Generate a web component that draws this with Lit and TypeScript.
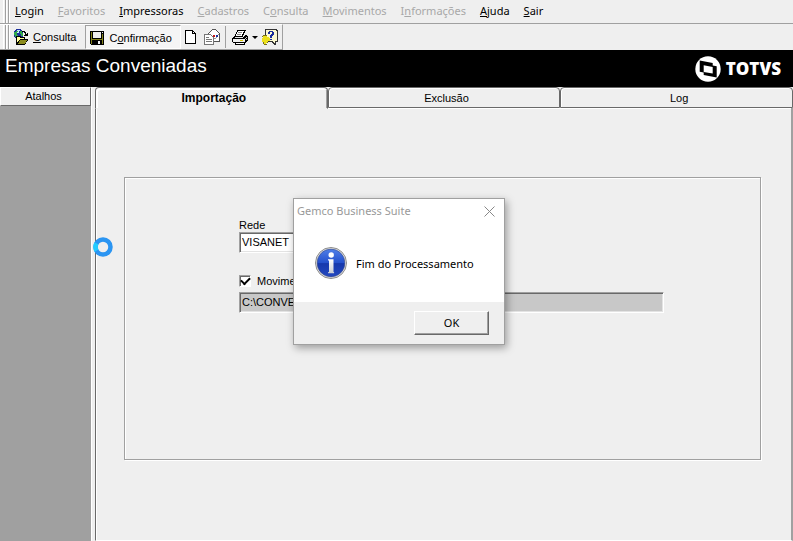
import { LitElement, html, css, svg } from "lit";
import { customElement, state } from "lit/decorators.js";
import { classMap } from "lit/directives/class-map.js";

const MENU = [
  { pre: "", key: "L", post: "ogin", off: false },
  { pre: "", key: "F", post: "avoritos", off: true },
  { pre: "", key: "I", post: "mpressoras", off: false },
  { pre: "", key: "C", post: "adastros", off: true },
  { pre: "C", key: "o", post: "nsulta", off: true },
  { pre: "", key: "M", post: "ovimentos", off: true },
  { pre: "I", key: "n", post: "formações", off: true },
  { pre: "", key: "A", post: "juda", off: false },
  { pre: "", key: "S", post: "air", off: false },
];

const TABS = ["Importação", "Exclusão", "Log"];

const searchIcon = svg`<svg width="16" height="16" viewBox="0 0 16 16" shape-rendering="crispEdges">
  <circle cx="5.500" cy="5" r="5" fill="#1c2f9c"/>
  <path d="M1 3h2v-1h2v2h-1v2h1v2h-3v-2h-1zM7 2h2v2h1v3h-2v-2h-1z" fill="#2fa84a"/>
  <path d="M4 1h3v1h-1v2h-2v-1h1v-1h-1z" fill="#c8ecf8"/>
  <path d="M3 7h4l1 1h4v2h3v1l-3 5h-9z" fill="#000"/>
  <path d="M4 8h2l1 1h4v1h-4l-3 4z" fill="#ffff9c"/>
  <path d="M7 11h7l-2 4h-7z" fill="#8a8a1c"/>
  <path d="M9 2h3v1h1v2h1v-1h1v3h-4v-1h1v-2h-1v-1h-2z" fill="#000"/>
</svg>`;

const diskIcon = svg`<svg width="14" height="14" viewBox="0 0 14 14" shape-rendering="crispEdges">
  <path d="M0 0h14v14h-13l-1-1z" fill="#000"/>
  <path d="M1 1h1v12h-1zM12 3h1v10h-1zM2 8h10v1h-10z" fill="#84841c"/>
  <path d="M3 1h8v6h-8z" fill="#efefef"/>
  <path d="M12 1h1v1h-1z" fill="#efefef"/>
  <path d="M8 10h2v3h-2z" fill="#efefef"/>
</svg>`;

const pageIcon = svg`<svg width="11" height="14" viewBox="0 0 11 14" shape-rendering="crispEdges">
  <path d="M0 0h8v1h1v1h1v1h1v11h-11z" fill="#000"/>
  <path d="M1 1h6v3h3v9h-9z" fill="#fff"/>
  <path d="M8 2h1v1h-1z" fill="#fff"/>
</svg>`;

const mailIcon = svg`<svg width="16" height="16" viewBox="0 0 16 16" shape-rendering="crispEdges">
  <path d="M4.500 4.500l4-4h3l4 4v8h-11z" fill="#fff" stroke="#555"/>
  <path d="M5 5l4 4h3l3-4" fill="none" stroke="#999"/>
  <path d="M9 6h2v2h-2z" fill="#c01818"/><path d="M12 6h2v2h-2z" fill="#1c2f9c"/>
  <path d="M.5 5.500h6l3 3v7h-9z" fill="#fff" stroke="#777"/>
  <path d="M2 8h3v1h-3zM2 10h6v1h-6zM2 12h6v1h-6z" fill="#777"/>
</svg>`;

const printIcon = svg`<svg width="16" height="15" viewBox="0 0 16 15" shape-rendering="crispEdges">
  <path d="M5 0h9v1h-1v2h-1v2h3v1h1v5h-1v1h-1v1h-1v2h-10v-2h-2v-1h-1v-4h1v-1h1v-1h1v-2h1v-2h1z" fill="#000"/>
  <path d="M6 1h6v1h-1v2h-1v2h-6v-2h1v-2h1z" fill="#fff"/>
  <path d="M6 2h4v1h-4zM5 4h4v1h-4z" fill="#888"/>
  <path d="M11 5h2v1h-1v1h-1zM3 7h8v1h-8z" fill="#e8e8e8"/>
  <path d="M1 9h12v3h-12z" fill="#efefef"/>
  <path d="M8 10h3v1h-3z" fill="#d8c800"/>
  <path d="M4 13h8v1h-8z" fill="#fff"/>
  <path d="M14 7h1v1h-1zM13 8h1v1h-1zM14 9h1v1h-1z" fill="#ccc"/>
</svg>`;

const helpIcon = svg`<svg width="16" height="16" viewBox="0 0 16 16" shape-rendering="crispEdges">
  <path d="M3 0h12v1h1v12h-2v3h-2l-1-1v-1h-1v-1h-7z" fill="#333"/>
  <path d="M4 1h10v1h1v10h-2v3l-3-3h-6z" fill="#fdfad0"/>
  <path d="M6 3h1v-1h4v1h1v3h-1v1h-1v2h-2v-3h1v-1h1v-2h-2v2h-2z" fill="#1c2f9c"/>
  <path d="M8 10h2v1h-2z" fill="#1c2f9c"/>
  <path d="M1 7h4v1h2v1h1v3h-2v2h-2v1h-3v-2h-1v-4h1z" fill="#ece01c"/>
  <path d="M1 6h4v1h-4zM0 7h1v1h-1zM0 13h1v2h1v1h3v-1h-3v-2zM5 14h1v-1h-1z" fill="#77701c"/>
</svg>`;

const totvsMark = svg`<svg width="26" height="26" viewBox="0 0 26 26">
  <circle cx="13" cy="13" r="12.700" fill="#fff"/>
  <path d="M4.700 4.500l13 2.600v2.400l4 .8v11.200l-13-2.600v-2.400l-4-.8z" fill="#000"/>
  <path d="M8.700 9.300l9 1.700v6.600l-9-1.700z" fill="#fff"/>
</svg>`;

const infoIcon = svg`<svg width="32" height="32" viewBox="0 0 32 32">
  <defs>
    <linearGradient id="ball" x1="0" y1="0" x2="0" y2="1">
      <stop offset="0" stop-color="#4f7fe8"/><stop offset=".5" stop-color="#2450cc"/>
      <stop offset=".52" stop-color="#1638ac"/><stop offset="1" stop-color="#2348c0"/>
    </linearGradient>
    <linearGradient id="stem" x1="0" y1="0" x2="0" y2="1">
      <stop offset="0" stop-color="#fff"/><stop offset="1" stop-color="#c8ccd4"/>
    </linearGradient>
  </defs>
  <circle cx="16" cy="16" r="15.500" fill="#e4e4e4" stroke="#8c8c8c"/>
  <circle cx="16" cy="16" r="13.900" fill="url(#ball)" stroke="#3c4c84" stroke-width=".6"/>
  <circle cx="16.200" cy="8" r="2.700" fill="#fff"/>
  <path d="M13 12.300h5.500v12.700h.6v1.200h-6v-1.200h.9v-11.500h-1z" fill="url(#stem)"/>
</svg>`;

@customElement("app-root")
export class AppRoot extends LitElement {
  @state() private tab = 0;

  static styles = css`
    :host {
      display: flex;
      flex-direction: column;
      position: relative;
      min-height: 100vh;
      overflow: hidden;
      background: #efefef;
      color: #000;
      font: 11px/14px "Liberation Sans", Arial, sans-serif;
    }
    * { box-sizing: border-box; }
    svg { display: block; flex: none; }
    button {
      margin: 0;
      padding: 0;
      border: 0;
      background: none;
      color: inherit;
      font: inherit;
      white-space: nowrap;
    }
    .menu {
      display: flex;
      align-items: center;
      height: 24px;
      gap: 14px;
      border-bottom: 1px solid #a0a0a0;
      font: 11px/16px "Noto Sans", sans-serif;
    }
    .grip {
      flex: none;
      align-self: stretch;
      width: 6px;
      margin-left: 3px;
      border: solid #a0a0a0;
      border-width: 0 1px 0 0;
      box-shadow: 1px 0 #fff;
      background: linear-gradient(90deg, #fff 1px, #efefef 1px 2px, #a0a0a0 2px 3px, #fff 3px 4px, #efefef 4px);
    }
    .menu .grip { margin-right: -8px; }
    .menu button { padding-bottom: 1px; }
    .menu button:disabled { color: #a8a8a8; }
    .toolbar { display: flex; height: 26px; background: #efefef; }
    .tools {
      display: flex;
      align-items: center;
      border-right: 1px solid #a0a0a0;
      border-top: 1px solid #fff;
      border-bottom: 1px solid #a0a0a0;
      padding-right: 4px;
    }
    .tool { display: flex; align-items: center; gap: 4px; padding: 0 4px; }
    .tool.pressed {
      align-self: stretch;
      gap: 5px;
      margin-left: 5px;
      padding: 1px 8px 0 4px;
      border: 1px solid #a0a0a0;
      border-color: #a0a0a0 #fff #fff #a0a0a0;
      background: #f5f5f5;
    }
    .divider { align-self: stretch; width: 1px; margin: 1px 2px 1px 1px; background: #a0a0a0; }
    .caret {
      border: 3px solid transparent;
      border-top-color: #000;
      border-bottom: 0;
    }
    .banner {
      display: flex;
      justify-content: space-between;
      align-items: center;
      height: 37px;
      padding: 0 12px 0 5px;
      background: #000;
      color: #fff;
    }
    h1 { margin: 0; padding-bottom: 6px; font-size: 19px; line-height: 24px; font-weight: 400; }
    .brand { display: flex; align-items: center; gap: 5px; font: 800 17px/24px "Open Sans", sans-serif; }
    .work { flex: 1; display: flex; }
    .side {
      flex: none;
      width: 92px;
      border-right: 1px solid #fff;
      background: #a0a0a0;
    }
    .side button {
      display: block;
      width: 100%;
      height: 19px;
      padding: 0 4px 1px 0;
      border: 1px solid #696969;
      border-color: #fff #696969 #696969 #fff;
      background: #efefef;
    }
    .book { flex: 1; min-width: 0; display: flex; flex-direction: column; margin: 0 0 0 3px; }
    .tabs { display: flex; }
    .tabs button {
      flex: 1;
      height: 21px;
      padding-left: 5px;
      border: 1px solid #696969;
      border-radius: 4px 4px 0 0;
      box-shadow: inset 1px 1px #fff;
    }
    .tabs button.on {
      height: 22px;
      margin-bottom: -1px;
      border-bottom-color: #efefef;
      background: #efefef;
      box-shadow: inset 2px 2px #fff, inset -1px 0 #a0a0a0;
      font-size: 12px;
      font-weight: 700;
      position: relative;
    }
    .page {
      flex: 1;
      padding: 69px 30px 80px 28px;
      border-left: 1px solid #696969;
      border-right: 2px solid #a0a0a0;
      border-bottom: 1px solid #fff;
      box-shadow: inset 1px 1px #fff;
    }
    .group {
      margin: 0;
      min-width: 0;
      padding: 40px 96px 146px 114px;
      border: 1px solid #a0a0a0;
      box-shadow: 1px 1px #fff, inset 1px 1px #fff;
    }
    .field { display: flex; flex-direction: column; }
    .field input, .path {
      height: 21px;
      margin: 0;
      padding: 0 1px 1px 2px;
      border: 1px solid;
      border-color: #a0a0a0 #fff #fff #a0a0a0;
      box-shadow: inset 1px 1px #696969, inset -1px -1px #e3e3e3;
      outline: 0;
      color: #000;
      background: #fff;
      font: 11px/16px "Liberation Sans", Arial, sans-serif;
    }
    .field input { width: 160px; }
    .path { width: 100%; display: block; margin-top: 4px; background: #c8c8c8; }
    .check { display: flex; align-items: center; gap: 6px; margin-top: 21px; }
    .check input {
      appearance: none;
      display: grid;
      place-items: center;
      width: 12px;
      height: 12px;
      margin: 0;
      border: 1px solid;
      border-color: #a0a0a0 #fff #fff #a0a0a0;
      box-shadow: inset 1px 1px #696969;
      background: #fff;
    }
    .check input:checked::before {
      content: "";
      width: 7px;
      height: 4px;
      margin: 0 0 2px 1px;
      border: solid #000;
      border-width: 0 0 2px 2px;
      transform: rotate(-45deg);
    }
    .busy {
      position: absolute;
      left: 93px;
      top: 237px;
    }
    dialog {
      position: absolute;
      inset: 198px auto auto 293px;
      width: 212px;
      margin: 0;
      padding: 0;
      border: 1px solid #a0a0a0;
      background: #fff;
      color: #000;
      box-shadow: 2px 3px 8px rgba(0, 0, 0, 0.35);
      font: 11px/16px "Noto Sans", sans-serif;
    }
    .caption {
      display: flex;
      justify-content: space-between;
      align-items: center;
      padding: 4px 9px 4px 3px;
      color: #999;
    }
    .message { display: flex; align-items: center; gap: 9px; padding: 24px 21px 23px; }
    .message p { margin: 0; padding-top: 2px; white-space: nowrap; }
    .actions { display: flex; justify-content: flex-end; padding: 9px 15px; background: #efefef; }
    .actions button {
      width: 75px;
      height: 24px;
      border: 1px solid;
      border-color: #fff #696969 #696969 #fff;
      box-shadow: inset -1px -1px #a0a0a0;
    }
  `;

  render() {
    return html`
      <nav class="menu" aria-label="Menu">
        <span class="grip"></span>
        ${MENU.map((m) => html`<button ?disabled=${m.off}>${m.pre}<u>${m.key}</u>${m.post}</button>`)}
      </nav>
      <div class="toolbar">
        <div class="tools">
          <span class="grip"></span>
          <button class="tool">${searchIcon}<span><u>C</u>onsulta</span></button>
          <button class="tool pressed">${diskIcon}<span>C<u>o</u>nfirmação</span></button>
          <button class="tool" aria-label="Novo">${pageIcon}</button>
          <button class="tool" aria-label="Enviar">${mailIcon}</button>
          <span class="divider"></span>
          <button class="tool" aria-label="Imprimir">${printIcon}<span class="caret"></span></button>
          <button aria-label="Ajuda">${helpIcon}</button>
        </div>
      </div>
      <header class="banner">
        <h1>Empresas Conveniadas</h1>
        <div class="brand">${totvsMark}<span>TOTVS</span></div>
      </header>
      <div class="work">
        <aside class="side"><button>Atalhos</button></aside>
        <main class="book">
          <div class="tabs" role="tablist">
            ${TABS.map(
              (t, i) => html`<button role="tab" aria-selected=${i === this.tab} class=${classMap({ on: i === this.tab })}
                @click=${() => (this.tab = i)}>${t}</button>`
            )}
          </div>
          <section class="page">
            <fieldset class="group">
              <label class="field">Rede<input type="text" value="VISANET" /></label>
              <label class="check"><input type="checkbox" checked />Movime</label>
              <input class="path" type="text" aria-label="Arquivo" readonly value="C:\\CONVE" />
            </fieldset>
          </section>
        </main>
      </div>
      <svg class="busy" width="20" height="20" viewBox="0 0 20 20">
        <circle cx="10" cy="10" r="7.500" fill="#efefef" stroke="#2b95f2" stroke-width="4.500"/>
        <path d="M3.500 6.300a7.500 7.500 0 0 0 0 7.400" fill="none" stroke="#22ccff" stroke-width="4.500"/>
      </svg>
      <dialog open aria-label="Gemco Business Suite">
        <div class="caption">
          <span>Gemco Business Suite</span>
          <button aria-label="Fechar">
            <svg width="11" height="11" viewBox="0 0 11 11"><path d="M.5.5l10 10M10.500.5l-10 10" stroke="#888" fill="none"/></svg>
          </button>
        </div>
        <div class="message">${infoIcon}<p>Fim do Processamento</p></div>
        <div class="actions"><button>OK</button></div>
      </dialog>
    `;
  }
}
